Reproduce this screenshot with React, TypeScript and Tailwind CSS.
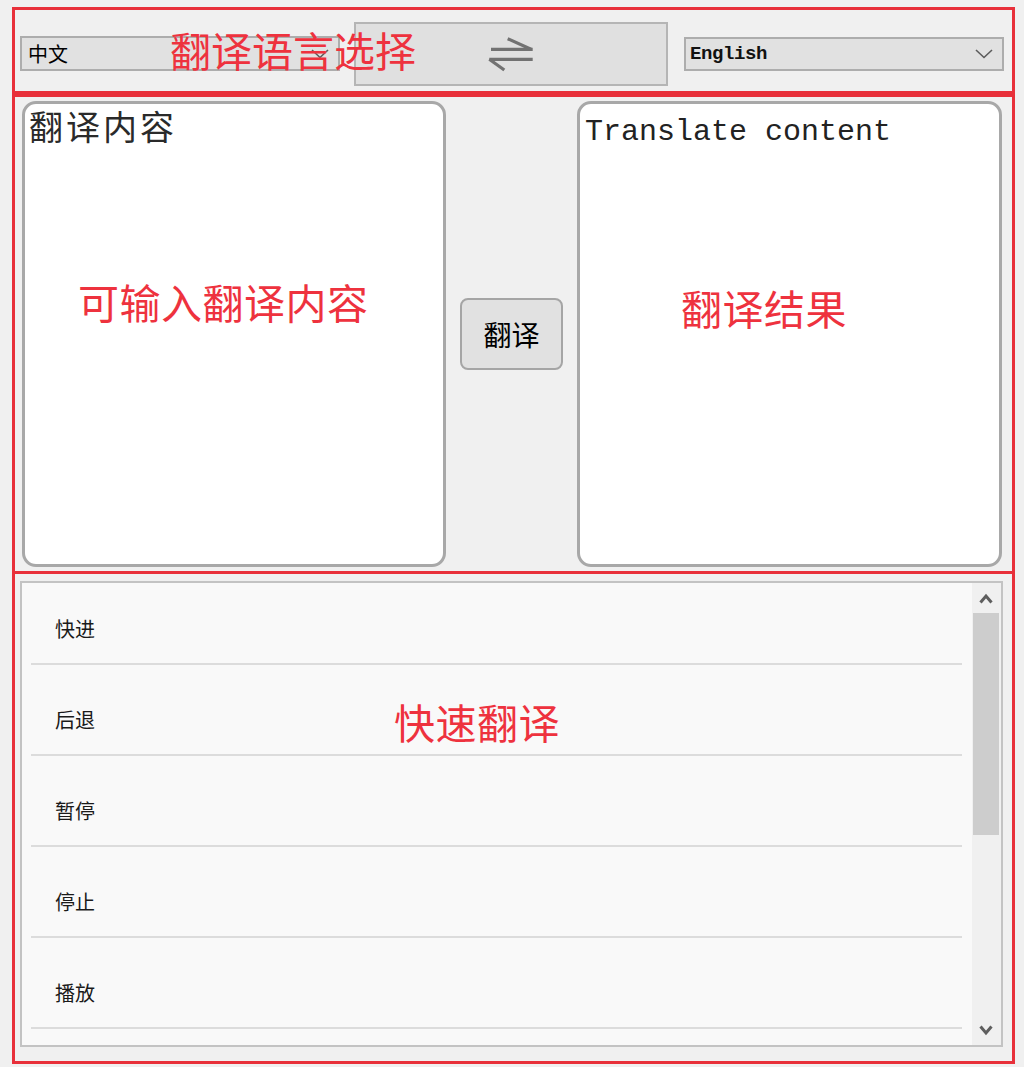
import React from "react";

const CJK = { fontFamily: '"Noto Sans CJK SC", "Noto Sans", sans-serif' };

function Chevron() {
  return (
    <svg width="18" height="10" viewBox="0 0 18 10">
      <polyline points="1,1 9,8.5 17,1" fill="none" stroke="#5c5c5c" strokeWidth="1.6" />
    </svg>
  );
}

function Row({ label, first }: { label: string; first?: boolean }) {
  return (
    <>
      <div
        className={
          first
            ? "h-[80px] shrink-0 pl-[33px] pt-[34px] text-[20px] leading-[24px] text-[#1a1a1a]"
            : "h-[89px] shrink-0 pl-[33px] pt-[43px] text-[20px] leading-[24px] text-[#1a1a1a]"
        }
        style={CJK}
      >
        {label}
      </div>
      <div className="ml-[9px] mr-[10px] h-[2px] shrink-0 bg-[#dcdcdc]" />
    </>
  );
}

export default function App() {
  return (
    <div className="relative h-[1067px] w-[1024px] overflow-hidden bg-[#f0f0f0] pt-[7px]">
      {/* Box 1: language selection */}
      <div className="ml-[12px] flex h-[87px] w-[1003px] items-start border-[3px] border-[#e8303a]">
        <div
          className="ml-[5px] mt-[26px] flex h-[35px] w-[320px] items-center justify-between border-2 border-[#adadad] bg-[#e1e1e1] pl-[6px] pr-[9px] text-[20px] text-black"
          style={CJK}
        >
          <span className="leading-none">中文</span>
          <Chevron />
        </div>
        <div className="ml-[14px] mt-[12px] flex h-[64px] w-[314px] items-center justify-center border-2 border-[#b5b5b5] bg-[#e0e0e0]">
          <svg width="48" height="37" viewBox="0 0 48 37">
            <g fill="none" stroke="#727272" strokeWidth="3.2" strokeLinecap="butt">
              <line x1="20.7" y1="2.7" x2="44" y2="13.3" />
              <line x1="4" y1="13.3" x2="45.7" y2="13.3" />
              <line x1="2.3" y1="23.3" x2="45.7" y2="23.3" />
              <line x1="2.3" y1="23.3" x2="17.3" y2="34" />
            </g>
          </svg>
        </div>
        <div className="ml-[16px] mt-[27px] flex h-[34px] w-[320px] items-center justify-between border-2 border-[#adadad] bg-[#e1e1e1] pl-[4px] pr-[9px]">
          <span
            className="text-[19px] font-bold leading-none tracking-[-0.4px] text-[#111]"
            style={{ fontFamily: '"Liberation Mono", monospace' }}
          >
            English
          </span>
          <Chevron />
        </div>
      </div>

      {/* Box 2: input / button / output */}
      <div className="ml-[12px] flex h-[480px] w-[1003px] items-center border-[3px] border-[#e8303a] pl-[7px]">
        <div className="h-[466px] w-[424px] rounded-[14px] border-[3px] border-[#a8a8a8] bg-white pl-[4px] pt-[5px]">
          <div className="text-[34px] leading-none tracking-[3px] text-[#2a2a2a]" style={CJK}>
            翻译内容
          </div>
        </div>
        <div
          className="ml-[14px] flex h-[72px] w-[103px] items-center justify-center rounded-[8px] border-2 border-[#a5a5a5] bg-[#e1e1e1] text-[28px] leading-none text-black"
          style={CJK}
        >
          翻译
        </div>
        <div className="ml-[14px] h-[466px] w-[425px] rounded-[14px] border-[3px] border-[#a8a8a8] bg-white pl-[5px] pt-[13px]">
          <div
            className="text-[30px] leading-none text-[#222]"
            style={{ fontFamily: '"Liberation Mono", monospace' }}
          >
            Translate content
          </div>
        </div>
      </div>

      {/* Box 3: quick translation list */}
      <div className="ml-[12px] h-[490px] w-[1003px] border-[3px] border-t-0 border-[#e8303a] pl-[5px] pt-[7px]">
        <div className="flex h-[466px] w-[983px] border-2 border-[#c3c3c3] bg-[#f9f9f9]">
          <div className="flex flex-1 flex-col overflow-hidden">
            <Row label="快进" first />
            <Row label="后退" />
            <Row label="暂停" />
            <Row label="停止" />
            <Row label="播放" />
          </div>
          <div className="flex w-[29px] flex-col bg-[#f0f0f0]">
            <div className="flex h-[30px] items-start pl-[7px] pt-[10px]">
              <svg width="14" height="11" viewBox="0 0 14 11">
                <polyline points="1.5,9.5 7,3 12.5,9.5" fill="none" stroke="#5e5e5e" strokeWidth="3" />
              </svg>
            </div>
            <div className="ml-[1px] h-[222px] w-[26px] bg-[#cdcdcd]" />
            <div className="flex flex-1 items-end pb-[9px] pl-[7px]">
              <svg width="14" height="11" viewBox="0 0 14 11">
                <polyline points="1.5,1.5 7,8 12.5,1.5" fill="none" stroke="#5e5e5e" strokeWidth="3" />
              </svg>
            </div>
          </div>
        </div>
      </div>

      {/* Red annotation labels */}
      <div className="absolute left-[170px] top-[29px] text-[41px] leading-none text-[#ee323e]" style={CJK}>
        翻译语言选择
      </div>
      <div className="absolute left-[78px] top-[281px] text-[41px] leading-none tracking-[0.5px] text-[#ee323e]" style={CJK}>
        可输入翻译内容
      </div>
      <div className="absolute left-[681px] top-[287px] text-[41px] leading-none tracking-[0.5px] text-[#ee323e]" style={CJK}>
        翻译结果
      </div>
      <div className="absolute left-[394px] top-[701px] text-[41px] leading-none tracking-[0.5px] text-[#ee323e]" style={CJK}>
        快速翻译
      </div>
    </div>
  );
}
